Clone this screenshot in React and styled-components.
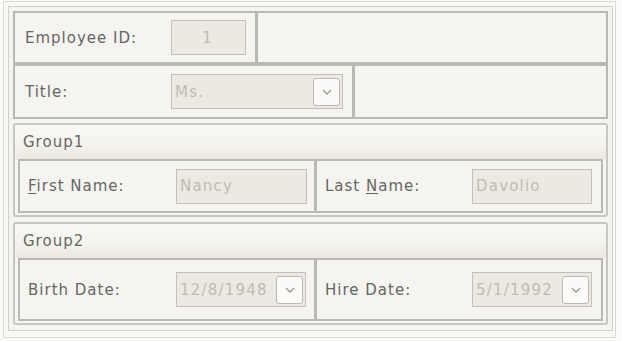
import React from "react";
import styled, { createGlobalStyle } from "styled-components";

const Global = createGlobalStyle`
  html, body { margin: 0; padding: 0; background: #fcfbfa; }
  body { font-family: "DejaVu Sans", Verdana, sans-serif; }
`;

const Frame = styled.div`
  margin: 1px 0 0 3px;
  width: 613px;
  height: 337px;
  border: 1px solid #dcdad5;
  padding: 4px;
  box-sizing: border-box;
  background: #f9f8f5;
`;

const Root = styled.div`
  width: 605px;
  height: 325px;
  box-sizing: border-box;
  border: 1px solid #d2d0ca;
  padding: 4px;
  display: flex;
  flex-direction: column;
  background: #f6f4f0;
`;

const Row = styled.div`
  display: flex;
  height: ${(p) => p.$h}px;
`;

const Cell = styled.div`
  box-sizing: border-box;
  border: 2px solid #bab8b2;
  display: flex;
  align-items: center;
  padding-left: ${(p) => p.$pad ?? 10}px;
  width: ${(p) => (p.$w ? `${p.$w}px` : "auto")};
  flex: ${(p) => (p.$w ? "none" : "1")};
  background: #f6f4f0;
  margin-left: ${(p) => (p.$join ? "-1px" : "0")};
`;

const Label = styled.span`
  width: ${(p) => p.$w}px;
  flex: none;
  font-size: 15px;
  letter-spacing: 1px;
  color: #666664;
  white-space: nowrap;
  u { text-decoration: underline; text-underline-offset: 2px; }
`;

const TextBox = styled.div`
  box-sizing: border-box;
  width: ${(p) => p.$w}px;
  height: 35px;
  border: 1px solid #c4c0b7;
  background: #ece9e2;
  display: flex;
  align-items: center;
  justify-content: ${(p) => (p.$center ? "center" : "flex-start")};
  padding-left: ${(p) => (p.$center ? 0 : 3)}px;
  padding-right: 2px;
  font-size: 15px;
  letter-spacing: 1.2px;
  color: #c0bcb3;
  white-space: nowrap;
`;

const Value = styled.span`
  flex: 1;
  overflow: hidden;
`;

const DropButton = styled.div`
  box-sizing: border-box;
  width: 27px;
  height: 28px;
  flex: none;
  border: 1px solid #bbb8b1;
  border-radius: 3px;
  background: #fbfaf8;
  display: flex;
  align-items: center;
  justify-content: center;
`;

const Group = styled.div`
  box-sizing: border-box;
  margin-top: ${(p) => p.$mt}px;
  height: ${(p) => p.$h}px;
  border: 2px solid #c8c6c0;
  border-radius: 3px;
  display: flex;
  flex-direction: column;
  padding: 0 3px 2px 3px;
  background: #f6f4f0;
`;

const GroupHeader = styled.div`
  height: 34px;
  flex: none;
  margin: 0 -3px;
  padding-left: 8px;
  display: flex;
  align-items: center;
  font-size: 15px;
  letter-spacing: 1px;
  color: #666664;
  background: linear-gradient(#f9f8f6, #f4f2ee 60%, #eae7e0);
`;

const GroupBody = styled.div`
  flex: 1;
  display: flex;
`;

const Chevron = () => (
  <svg width="12" height="8" viewBox="0 0 12 8">
    <path d="M2 2 L6 6 L10 2" fill="none" stroke="#9a9893" strokeWidth="1.3" />
  </svg>
);

const Combo = ({ w, value }) => (
  <TextBox $w={w}>
    <Value>{value}</Value>
    <DropButton>
      <Chevron />
    </DropButton>
  </TextBox>
);

export default function App() {
  return (
    <>
      <Global />
      <Frame>
        <Root>
          <Row $h={53}>
            <Cell $w={244}>
              <Label $w={146}>Employee ID:</Label>
              <TextBox $w={75} $center>1</TextBox>
            </Cell>
            <Cell $join />
          </Row>
          <Row $h={55}>
            <Cell $w={341}>
              <Label $w={146}>Title:</Label>
              <Combo w={172} value="Ms." />
            </Cell>
            <Cell $join />
          </Row>
          <Group $mt={4} $h={94}>
            <GroupHeader>Group1</GroupHeader>
            <GroupBody>
              <Cell $w={298} $pad={8}>
                <Label $w={148}>
                  <u>F</u>irst Name:
                </Label>
                <TextBox $w={131}>Nancy</TextBox>
              </Cell>
              <Cell $join $pad={8}>
                <Label $w={147}>
                  Last <u>N</u>ame:
                </Label>
                <TextBox $w={120}>Davolio</TextBox>
              </Cell>
            </GroupBody>
          </Group>
          <Group $mt={5} $h={103}>
            <GroupHeader>Group2</GroupHeader>
            <GroupBody>
              <Cell $w={298} $pad={8}>
                <Label $w={148}>Birth Date:</Label>
                <Combo w={130} value="12/8/1948" />
              </Cell>
              <Cell $join $pad={8}>
                <Label $w={147}>Hire Date:</Label>
                <Combo w={120} value="5/1/1992" />
              </Cell>
            </GroupBody>
          </Group>
        </Root>
      </Frame>
    </>
  );
}
